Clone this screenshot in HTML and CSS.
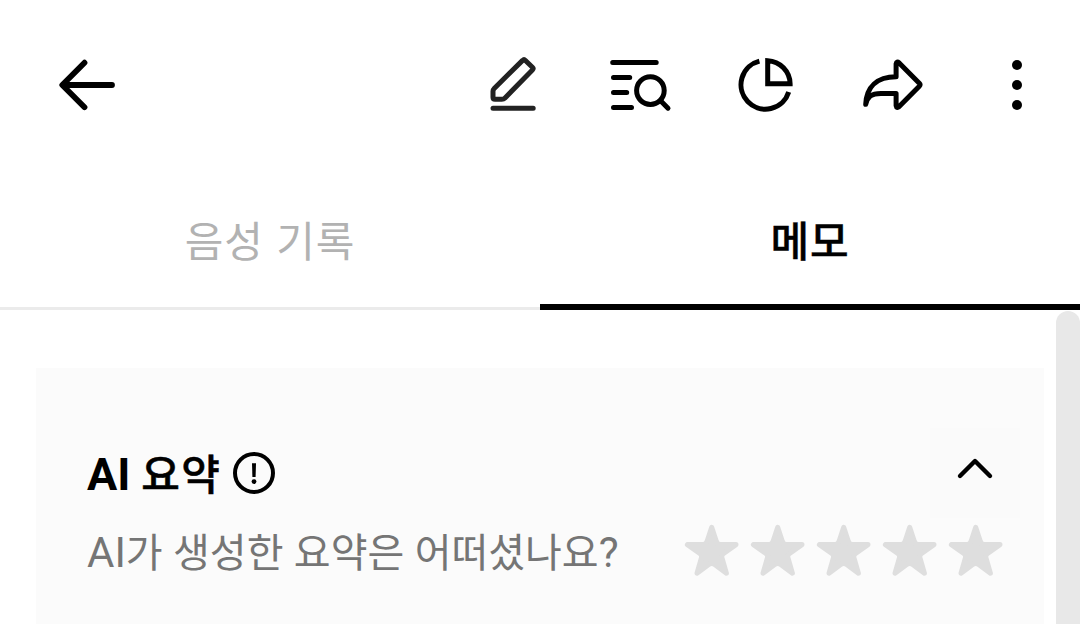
FILE: index.html
```html
<!DOCTYPE html>
<html lang="ko">
<head>
    <meta charset="UTF-8">
    <meta name="viewport" content="width=device-width, initial-scale=1.0">
    <title>메모</title>
    <link rel="stylesheet" href="styles.css">
</head>
<body>

    <!-- Toolbar -->
    <header class="toolbar">
        <button class="icon-btn back" aria-label="뒤로">
            <svg viewBox="0 0 72 72"><path d="M33.5 13.7L11.3 36L33.5 58.2M12 36H61" stroke-width="5.8"/></svg>
        </button>
        <button class="icon-btn edit" aria-label="편집">
            <svg viewBox="0 0 72 72"><path d="M45.6 11.4Q47 10 48.4 11.4L55.4 18.2Q56.8 19.6 55.4 21L28 49Q26.7 50.3 24.8 50.3H18Q16 50.3 16 48.3V42.2Q16 40.6 17.2 39.4ZM16 59.3H56.2"/></svg>
        </button>
        <button class="icon-btn" aria-label="검색">
            <svg viewBox="0 0 72 72">
                <path d="M9.7 13.4H53.2M10.5 28.4H26.7M10.5 43.4H23.7M10.5 58.4H28.5M57.6 51.8L65 59.2"/>
                <circle cx="47.4" cy="41.6" r="13.8"/>
            </svg>
        </button>
        <button class="icon-btn pie" aria-label="통계">
            <svg viewBox="0 0 72 72"><path d="M30.4 12.1A24.4 24.4 0 1 0 59.7 43M38.7 11.7A23.4 23.4 0 0 1 61.1 34.7H38.7Z"/></svg>
        </button>
        <button class="icon-btn" aria-label="공유">
            <svg viewBox="0 0 72 72"><path d="M41.1 15V27.7C22 27.7 11.5 38 10.7 55.3C12.5 48 16 44.4 26 44.4H41.1V56.5Q41.6 59.7 44.2 57.5L64.3 37.2Q65.7 35.8 64.3 34.3L44.2 14Q41.6 11.8 41.1 15Z"/></svg>
        </button>
        <button class="icon-btn more" aria-label="더보기">
            <svg viewBox="0 0 72 72"><circle cx="36" cy="16" r="5"/><circle cx="36" cy="36" r="5"/><circle cx="36" cy="56" r="5"/></svg>
        </button>
    </header>

    <!-- Tabs -->
    <nav class="tabs">
        <div class="tab">음성 기록</div>
        <div class="tab active">메모</div>
    </nav>

    <!-- Memo content -->
    <main class="content">
        <section class="summary">
            <div class="summary-head">
                <h1><span class="latin">AI</span> 요약</h1>
                <svg class="info" viewBox="0 0 42 42">
                    <circle class="ring" cx="21" cy="21" r="19"/>
                    <path d="M19 11.3H23L22.6 25H19.4Z"/>
                    <circle class="dot" cx="21" cy="29.6" r="2.4"/>
                </svg>
                <button class="collapse" aria-label="접기">
                    <svg viewBox="0 0 90 90"><path d="M30 48L45 33L60 48"/></svg>
                </button>
            </div>
            <div class="feedback">
                <p><span class="latin">AI</span>가 생성한 요약은 어떠셨나요<span class="latin">?</span></p>
                <div class="stars">
                    <svg class="star" viewBox="0 0 66 66"><use href="#star"/></svg>
                    <svg class="star" viewBox="0 0 66 66"><use href="#star"/></svg>
                    <svg class="star" viewBox="0 0 66 66"><use href="#star"/></svg>
                    <svg class="star" viewBox="0 0 66 66"><use href="#star"/></svg>
                    <svg class="star" viewBox="0 0 66 66"><use href="#star"/></svg>
                </div>
            </div>
        </section>
        <div class="scrollbar"></div>
    </main>

    <svg class="defs">
        <defs>
            <path id="star" d="M32.7 9.4L37.4 23.5Q38.6 26.6 41.6 26.6H57L44.6 35.4Q42 37.2 43 40L47.4 55.2L36 46.7Q32.7 44.4 29.4 46.7L18 55.2L22.4 40Q23.4 37.2 20.8 35.4L8.4 26.6H23.8Q26.8 26.6 28 23.5Z"/>
        </defs>
    </svg>

</body>
</html>
```

FILE: styles.css
```css
* { margin: 0; padding: 0; box-sizing: border-box; }

body {
    height: 100vh;
    display: flex;
    flex-direction: column;
    overflow: hidden;
    background: #fff;
    color: #000;
    font-family: "Noto Sans CJK KR", sans-serif;
}

button {
    border: none;
    background: none;
}

svg {
    display: block;
    fill: none;
    stroke: #000;
    stroke-width: 5;
    stroke-linecap: round;
    stroke-linejoin: round;
}

.defs {
    display: none;
}

.latin {
    font-family: Roboto, sans-serif;
    letter-spacing: 0;
    line-height: 1;
    -webkit-text-stroke: 0;
}

/* Toolbar */
.toolbar {
    flex: none;
    height: 170px;
    display: flex;
    align-items: center;
    gap: 54px;
    padding: 0 27px 0 51px;
}

.icon-btn {
    width: 72px;
    height: 72px;
}

.back {
    margin-right: auto;
}

.edit svg {
    stroke: #222;
}

.pie svg {
    stroke-linecap: butt;
    stroke-linejoin: miter;
}

.more svg {
    fill: #000;
    stroke: none;
}

/* Tabs */
.tabs {
    flex: none;
    height: 140px;
    display: flex;
}

.tab {
    width: 50%;
    display: flex;
    align-items: center;
    justify-content: center;
    border-bottom: 3px solid #ebebeb;
    font-size: 42px;
    letter-spacing: 0.8px;
    color: #b2b2b2;
}

.tab.active {
    border-bottom: 6px solid #000;
    padding-top: 3px;
    font-weight: 500;
    color: #000;
    -webkit-text-stroke: 0.4px #000;
}

/* Summary panel */
.content {
    flex: 1;
    display: flex;
    padding-left: 36px;
}

.summary {
    flex: 1;
    margin: 58px 12px 0 0;
    padding: 60px 24px 0 51px;
    background: #fbfbfb;
}

.summary-head {
    height: 90px;
    display: flex;
    align-items: center;
}

.summary-head h1 {
    padding-bottom: 2px;
    font-size: 42px;
    font-weight: 500;
    line-height: 60px;
    letter-spacing: 1.4px;
    word-spacing: -2.4px;
    -webkit-text-stroke: 0.5px #000;
}

.summary-head .latin {
    font-size: 45px;
    font-weight: 700;
}

.info {
    width: 42px;
    height: 42px;
    margin-left: 12px;
    fill: #000;
    stroke: none;
}

.info .ring {
    fill: none;
    stroke: #000;
    stroke-width: 4;
}

.collapse {
    width: 90px;
    height: 90px;
    margin-left: auto;
    background: #fafafa;
}

.collapse svg {
    stroke-width: 4.4;
}

.feedback {
    height: 66px;
    display: flex;
    align-items: center;
    justify-content: space-between;
    padding-right: 11px;
}

.feedback p {
    padding-bottom: 3px;
    font-size: 40px;
    word-spacing: -0.8px;
    color: #757575;
}

.feedback .latin {
    font-size: 42px;
}

.stars {
    display: flex;
}

.star {
    width: 66px;
    height: 66px;
    fill: #dedede;
    stroke: #dedede;
}

.scrollbar {
    width: 24px;
    margin-top: 1px;
    border-radius: 12px 12px 0 0;
    background: #e8e8e8;
}
```
